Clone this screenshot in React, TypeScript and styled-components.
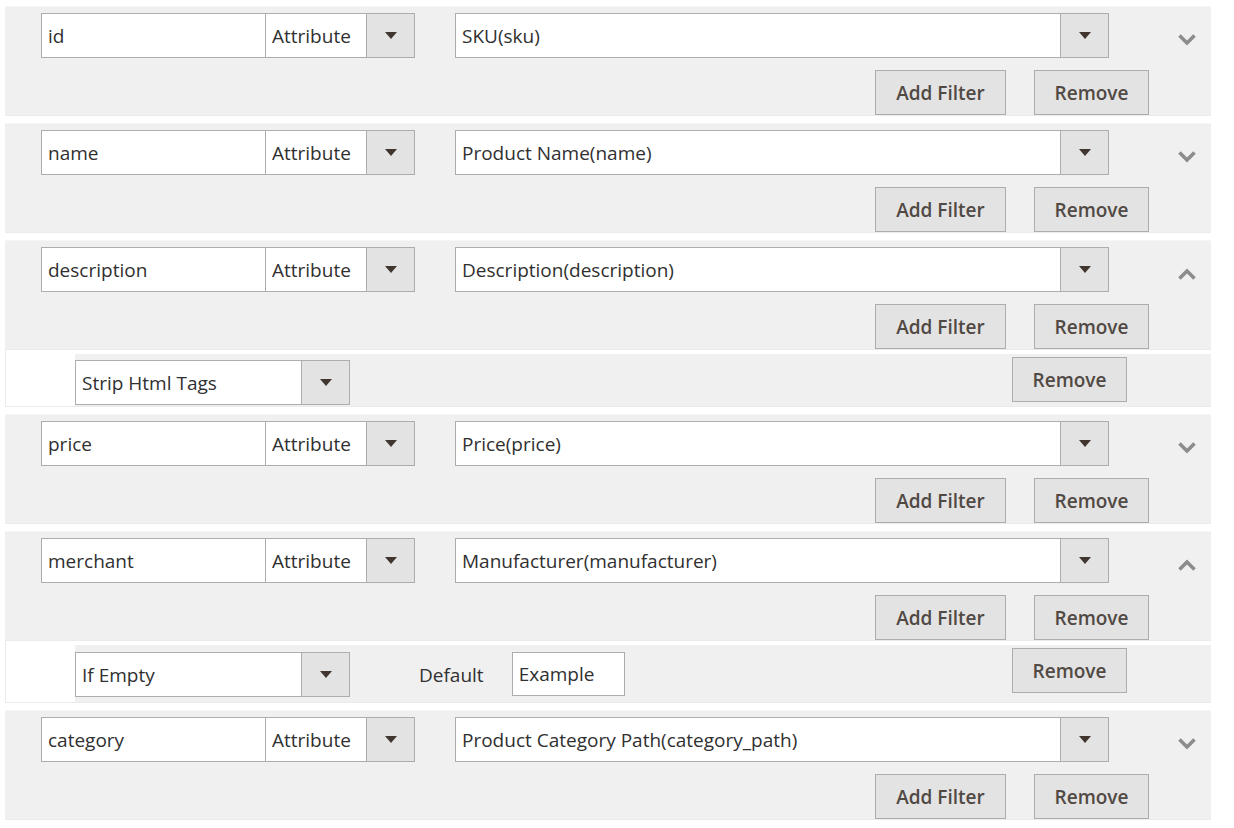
import styled, { createGlobalStyle } from "styled-components";

const GlobalStyle = createGlobalStyle`
  body {
    margin: 0;
    background: #ffffff;
    font-family: "Open Sans", "Liberation Sans", sans-serif;
    color: #303030;
  }
`;

const Page = styled.div`
  display: flex;
  flex-direction: column;
  width: 1206px;
  padding: 6px 0 0 5px;
`;

const Field = styled.section<{ first: boolean }>`
  margin-top: ${({ first }) => (first ? "0" : "7px")};
  border-top: 1px solid #f6f6f6;
  border-bottom: 1px solid #ebebeb;
`;

const Block = styled.div`
  display: flex;
  flex-direction: column;
  height: 108px;
  padding: 6px 62px 0 36px;
  background: #f0f0f0;
  box-sizing: border-box;
`;

const TopRow = styled.div`
  display: flex;
  flex-direction: row;
  align-items: flex-start;
`;

const BotRow = styled.div`
  display: flex;
  flex-direction: row;
  justify-content: flex-end;
  gap: 28px;
  margin-top: 12px;
`;

const TextInput = styled.div<{ width: number }>`
  display: flex;
  align-items: center;
  flex-shrink: 0;
  width: ${({ width }) => width}px;
  height: 45px;
  padding-left: 6px;
  box-sizing: border-box;
  background: #ffffff;
  border: 1px solid #adadad;
  font-size: 19px;
  color: #303030;
`;

const Select = styled.div<{ width: number; joined?: boolean; gapLeft?: number }>`
  display: flex;
  flex-direction: row;
  flex-shrink: 0;
  width: ${({ width }) => width}px;
  height: 45px;
  margin-left: ${({ gapLeft }) => gapLeft ?? 0}px;
  box-sizing: border-box;
  background: #ffffff;
  border: 1px solid #adadad;
  border-left: ${({ joined }) => (joined ? "none" : "1px solid #adadad")};
  font-size: 19px;
  color: #303030;
`;

const SelectValue = styled.div`
  flex: 1;
  display: flex;
  align-items: center;
  padding-left: 6px;
  white-space: nowrap;
  overflow: hidden;
`;

const SelectButton = styled.div`
  display: flex;
  align-items: center;
  justify-content: center;
  flex-shrink: 0;
  width: 47px;
  background: #e3e3e3;
  border-left: 1px solid #adadad;
`;

const Arrow = styled.span`
  width: 0;
  height: 0;
  border-left: 6px solid transparent;
  border-right: 6px solid transparent;
  border-top: 7px solid #41362f;
`;

const Toggle = styled.svg`
  margin: 20px 0 0 68px;
  flex-shrink: 0;
`;

const Button = styled.div<{ width: number; top?: number }>`
  display: flex;
  align-items: center;
  justify-content: center;
  flex-shrink: 0;
  width: ${({ width }) => width}px;
  height: 45px;
  margin-top: ${({ top }) => top ?? 0}px;
  box-sizing: border-box;
  background: #e3e3e3;
  border: 1px solid #adadad;
  font-size: 19px;
  font-weight: 600;
  color: #514943;
`;

const SubRow = styled.div`
  display: flex;
  padding: 4px 0 0 69px;
  border-left: 1px solid #ebebeb;
  border-bottom: 1px solid #ebebeb;
`;

const SubBlock = styled.div<{ height: number }>`
  flex: 1;
  display: flex;
  flex-direction: row;
  align-items: flex-start;
  height: ${({ height }) => height}px;
  padding-right: 84px;
  background: #f0f0f0;
`;

const SubLeft = styled.div<{ top: number }>`
  display: flex;
  flex-direction: row;
  align-items: center;
  flex: 1;
  margin-top: ${({ top }) => top}px;
`;

const Label = styled.span`
  margin: 0 28px 0 69px;
  font-size: 19px;
  color: #303030;
`;

const SmallInput = styled(TextInput)`
  height: 44px;
  margin-top: -1px;
`;

const Chevron = ({ up }: { up: boolean }) => (
  <Toggle width="20" height="14" viewBox="0 0 20 14">
    <polyline
      points={up ? "2.5,11.5 10,4 17.5,11.5" : "2.5,2.5 10,10 17.5,2.5"}
      fill="none"
      stroke="#8c8c8c"
      strokeWidth="3.6"
    />
  </Toggle>
);

const DropDown = ({ value, width, joined, gapLeft }: { value: string; width: number; joined?: boolean; gapLeft?: number }) => (
  <Select width={width} joined={joined} gapLeft={gapLeft}>
    <SelectValue>{value}</SelectValue>
    <SelectButton>
      <Arrow />
    </SelectButton>
  </Select>
);

interface Modifier {
  type: string;
  defaultValue?: string;
}

interface FieldRow {
  name: string;
  source: string;
  open: boolean;
  modifier?: Modifier;
}

const fields: FieldRow[] = [
  { name: "id", source: "SKU(sku)", open: false },
  { name: "name", source: "Product Name(name)", open: false },
  {
    name: "description",
    source: "Description(description)",
    open: true,
    modifier: { type: "Strip Html Tags" },
  },
  { name: "price", source: "Price(price)", open: false },
  {
    name: "merchant",
    source: "Manufacturer(manufacturer)",
    open: true,
    modifier: { type: "If Empty", defaultValue: "Example" },
  },
  { name: "category", source: "Product Category Path(category_path)", open: false },
];

export default function App() {
  return (
    <>
      <GlobalStyle />
      <Page>
        {fields.map((field, index) => (
          <div key={field.name}>
            <Field first={index === 0}>
              <Block>
                <TopRow>
                  <TextInput width={225}>{field.name}</TextInput>
                  <DropDown value="Attribute" width={149} joined />
                  <DropDown value={field.source} width={654} gapLeft={40} />
                  <Chevron up={field.open} />
                </TopRow>
                <BotRow>
                  <Button width={131}>Add Filter</Button>
                  <Button width={115}>Remove</Button>
                </BotRow>
              </Block>
            </Field>
            {field.modifier && (
              <SubRow>
                <SubBlock height={field.modifier.defaultValue ? 57 : 52}>
                  <SubLeft top={field.modifier.defaultValue ? 7 : 6}>
                    <DropDown value={field.modifier.type} width={275} />
                    {field.modifier.defaultValue && (
                      <>
                        <Label>Default</Label>
                        <SmallInput width={113}>{field.modifier.defaultValue}</SmallInput>
                      </>
                    )}
                  </SubLeft>
                  <Button width={115} top={3}>
                    Remove
                  </Button>
                </SubBlock>
              </SubRow>
            )}
          </div>
        ))}
      </Page>
    </>
  );
}
